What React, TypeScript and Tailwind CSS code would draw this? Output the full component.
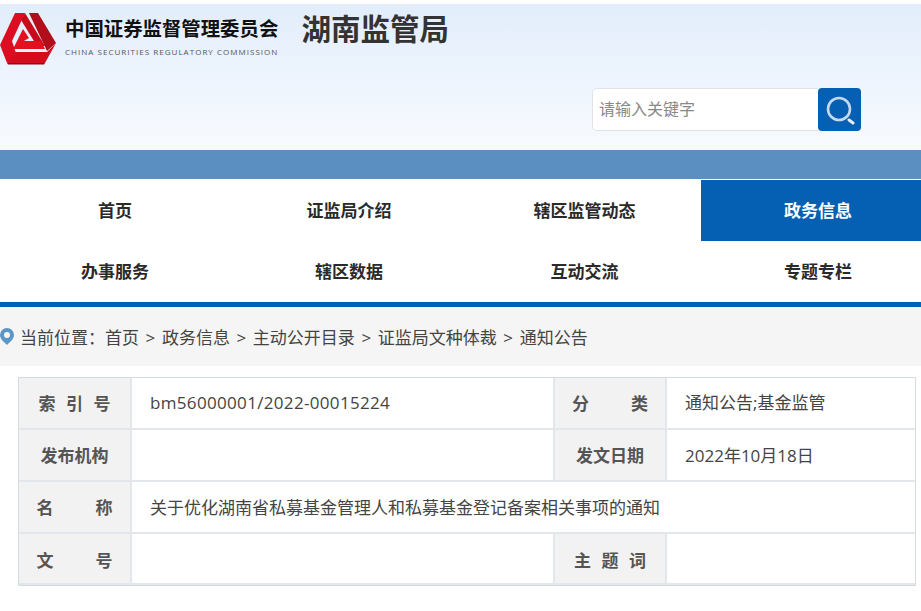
const nav = [
  { label: "首页" },
  { label: "证监局介绍" },
  { label: "辖区监管动态" },
  { label: "政务信息", active: true },
  { label: "办事服务" },
  { label: "辖区数据" },
  { label: "互动交流" },
  { label: "专题专栏" },
];

const crumbs = ["首页", "政务信息", "主动公开目录", "证监局文种体裁", "通知公告"];

function Logo() {
  return (
    <svg viewBox="0 0 58 54" className="h-[54px] w-[58px] shrink-0">
      <path d="M15 1H25L12 29 16 41 7 51 0 33z" fill="#dc0d20" />
      <path d="M29 1H38L56 31 47 39z" fill="#b20d1a" />
      <path d="M25 1L45 34H37L21 8z" fill="#c70b1c" />
      <path d="M23 17L29 26 24 29H41L45 37H13z" fill="#e5101f" />
      <path d="M7 51L15 40H47L56 31 45 51z" fill="#d40c1e" />
      <path d="M7 51H45L44 52.5H8z" fill="#8f0a14" />
    </svg>
  );
}

function Label({ text, width, className = "pt-[1px]" }: { text: string; width: string; className?: string }) {
  return (
    <div className={`flex items-center justify-center bg-[#f2f2f2] border-r-2 border-[#dde2e8] font-bold text-[#555] ${className}`}>
      <div className={`flex justify-between ${width}`}>
        {text.split("").map((c) => (
          <span key={c}>{c}</span>
        ))}
      </div>
    </div>
  );
}

export default function App() {
  return (
    <div className="h-[611px] w-[921px] overflow-hidden bg-white font-['Open_Sans','Noto_Sans_CJK_SC',sans-serif] text-[17px] text-[#444]">
      <header className="mt-1 h-[146px] bg-gradient-to-b from-[#e2edfb] to-[#f8fbff]">
        <div className="flex pt-2">
          <Logo />
          <div className="ml-[7px] pt-[2px]">
            <div className="text-[19.4px] leading-[30px] font-bold text-[#111] whitespace-nowrap">中国证券监督管理委员会</div>
            <div className="mt-[2px] font-['Open_Sans',sans-serif] text-[8px] leading-[12px] tracking-[1.03px] text-[#555] whitespace-nowrap">
              CHINA SECURITIES REGULATORY COMMISSION
            </div>
          </div>
          <div className="ml-[23px] -mt-[2px] text-[29.5px] leading-[38px] font-bold text-[#333] whitespace-nowrap">湖南监管局</div>
        </div>
        <div className="mt-[22px] ml-[592px] flex h-[43px] w-[269px]">
          <div className="flex flex-1 items-center rounded-l-[5px] border border-r-0 border-[#dfe3e8] bg-white pb-[1px] pl-[6px] text-[16px] text-[#888]">
            请输入关键字
          </div>
          <div className="flex w-[43px] items-center justify-center rounded-[4px] bg-[#055fb3]">
            <svg viewBox="0 0 30 30" className="h-[30px] w-[30px]" fill="none" stroke="#c5d9ee">
              <circle cx="14" cy="14" r="11" strokeWidth="2.6" />
              <path d="M24 25l4 3" strokeWidth="3" strokeLinecap="round" stroke="#e6eef7" />
            </svg>
          </div>
        </div>
      </header>
      <div className="h-[29px] bg-[#5b8fc2]" />
      <nav className="mt-[1px] box-content grid w-[935px] grid-cols-[230px_238px_233px_234px] grid-rows-[61px_61px] border-b-[5px] border-[#055fb3]">
        {nav.map((n) => (
          <div
            key={n.label}
            className={`flex items-center justify-center font-bold ${n.active ? "bg-[#055fb3] text-white" : "text-[#2a2a2a]"}`}
          >
            {n.label}
          </div>
        ))}
      </nav>
      <div className="flex h-[59px] items-center bg-[#f5f5f5] pt-[2px] text-[#444]">
        <svg viewBox="0 0 14 17" className="-mt-[2px] h-[17px] w-[14px] shrink-0">
          <path fillRule="evenodd" d="M7 0a7 7 0 0 1 7 7c0 4-4 7-7 10C4 14 0 11 0 7a7 7 0 0 1 7-7zm0 4a3 3 0 1 0 0 6 3 3 0 0 0 0-6z" fill="#5b97c6" />
        </svg>
        <span className="ml-[6px] whitespace-pre">当前位置：</span>
        {crumbs.map((c, i) => (
          <span key={c} className="flex whitespace-pre">
            {i > 0 && <span className="mx-[6.6px]">&gt;</span>}
            {c}
          </span>
        ))}
      </div>
      <div className="mt-[11px] ml-[18px] grid h-[209px] w-[898px] grid-cols-[113px_423px_112px_248px] grid-rows-[52px_52px_52px_51px] border border-[#d5dbe2] [&>*]:border-b-2 [&>*]:border-[#e3e7ec]">
        <Label text="索引号" width="w-[72px]" />
        <div className="flex items-center border-r-2 border-[#dde2e8] pl-[18px] tracking-[0.33px]">bm56000001/2022-00015224</div>
        <Label text="分类" width="w-[76px]" />
        <div className="flex items-center pl-[18px]">通知公告;基金监管</div>

        <Label text="发布机构" width="w-[68px]" className="pt-[2px]" />
        <div className="border-r-2 border-[#dde2e8]" />
        <Label text="发文日期" width="w-[68px]" className="pt-[2px]" />
        <div className="flex items-center pl-[18px] pt-[2px]">2022年10月18日</div>

        <Label text="名称" width="w-[76px]" className="pt-[2px]" />
        <div className="col-span-3 flex items-center pl-[18px] pt-[2px]">关于优化湖南省私募基金管理人和私募基金登记备案相关事项的通知</div>

        <Label text="文号" width="w-[76px]" className="pt-[4px]" />
        <div className="border-r-2 border-[#dde2e8]" />
        <Label text="主题词" width="w-[72px]" className="pt-[4px]" />
        <div />
      </div>
    </div>
  );
}
